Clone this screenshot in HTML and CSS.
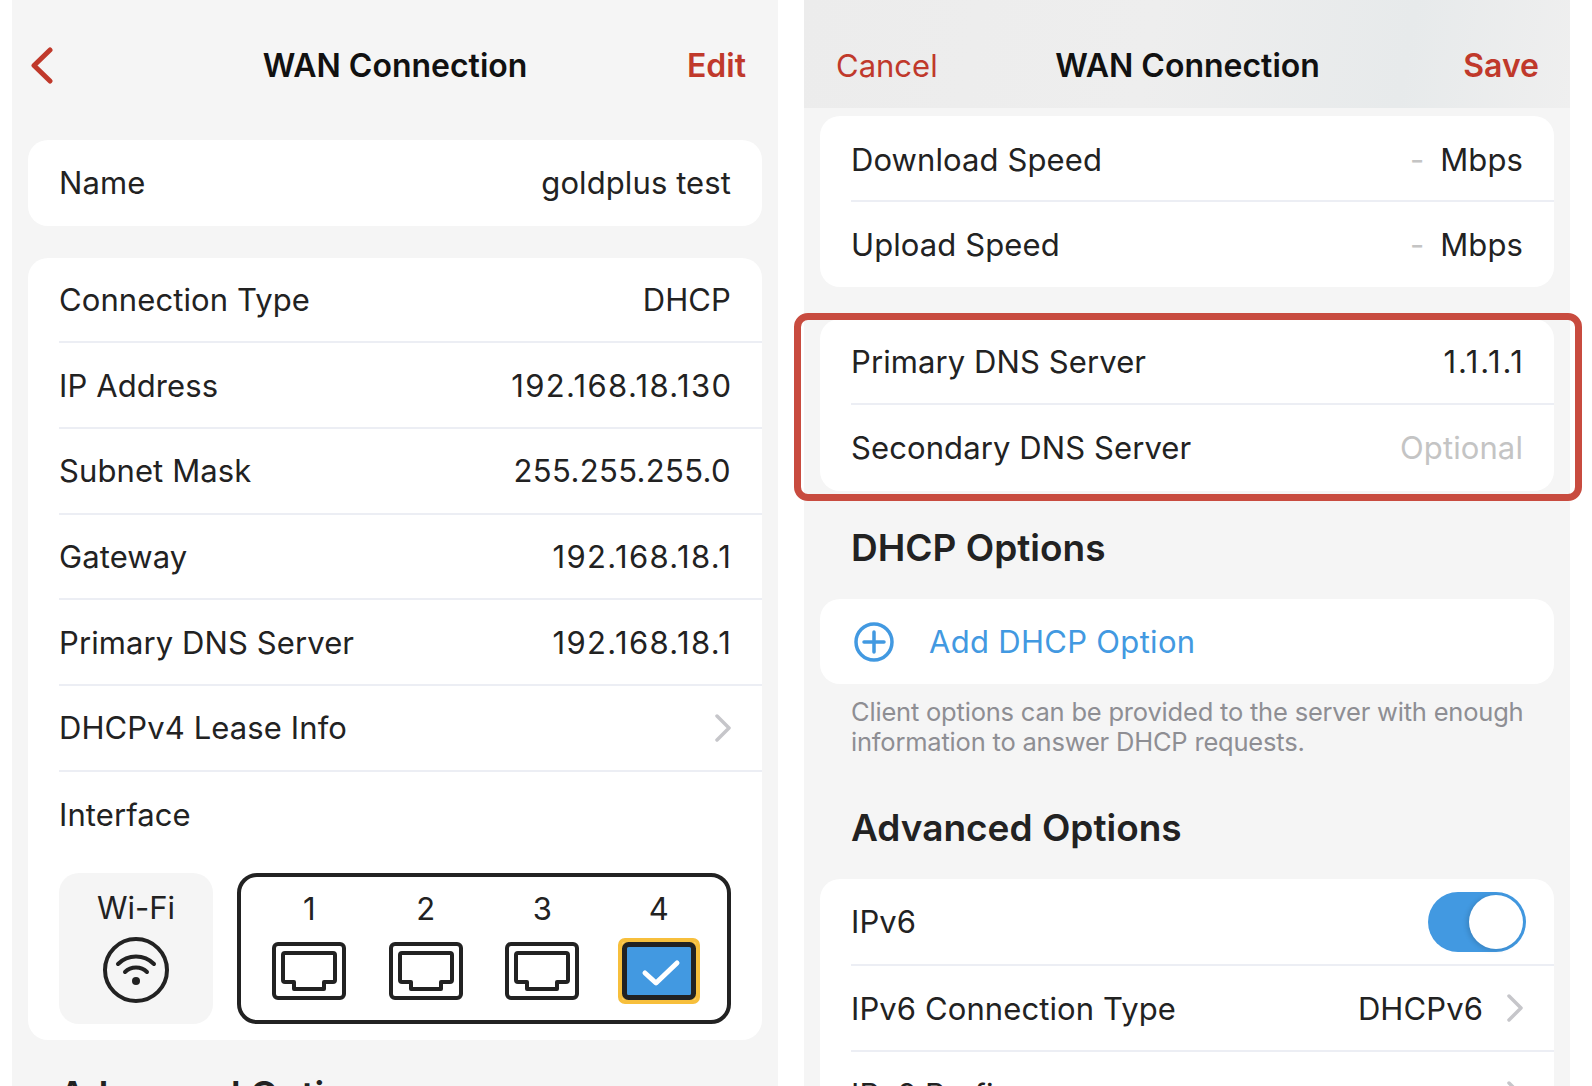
FILE: index.html
```html
<!DOCTYPE html>
<html lang="en">
<head>
<meta charset="utf-8">
<title>WAN Connection</title>
<link rel="stylesheet" href="styles.css">
</head>
<body>
<main class="screens">
  <section class="panel panel-view">
    <header class="nav nav-view">
      <span class="nav-left"><svg class="back" viewBox="0 0 24 37" width="24" height="37"><path d="M20 3 L4 18.5 L20 34" /></svg></span>
      <h1 class="nav-title">WAN Connection</h1>
      <span class="nav-right strong">Edit</span>
    </header>
    <div class="content content-view">
      <div class="card">
        <div class="row"><span>Name</span><span>goldplus test</span></div>
      </div>
      <div class="card">
        <div class="row"><span>Connection Type</span><span>DHCP</span></div>
        <div class="row"><span>IP Address</span><span class="ip-wide">192.168.18.130</span></div>
        <div class="row"><span>Subnet Mask</span><span class="ip-tight">255.255.255.0</span></div>
        <div class="row"><span>Gateway</span><span class="ip-wide">192.168.18.1</span></div>
        <div class="row"><span>Primary DNS Server</span><span class="ip-wide">192.168.18.1</span></div>
        <div class="row"><span>DHCPv4 Lease Info</span><svg class="chev" viewBox="0 0 16 28" width="16" height="28"><path d="M2 2 L14 14 L2 26" /></svg></div>
        <div class="row row-plain"><span>Interface</span></div>
        <div class="interface">
          <div class="wifi">
            <span>Wi-Fi</span>
            <svg viewBox="0 0 68 68" width="68" height="68"><circle class="ic" cx="34" cy="34" r="31"/><path class="ic" d="M16 28 C26 18 42 18 52 28"/><path class="ic" d="M23 36 C29 30 39 30 45 36"/><circle class="dot" cx="34" cy="45" r="4"/></svg>
          </div>
          <div class="ports">
            <div class="port"><span>1</span><svg viewBox="0 0 74 58" width="74" height="58"><rect class="ic" x="2" y="2" width="70" height="54" rx="4"/><path class="ic" d="M13 11 H61 Q63 11 63 13 V38 Q63 40 61 40 H52 V47 H22 V40 H13 Q11 40 11 38 V13 Q11 11 13 11 Z"/></svg></div>
            <div class="port"><span>2</span><svg viewBox="0 0 74 58" width="74" height="58"><rect class="ic" x="2" y="2" width="70" height="54" rx="4"/><path class="ic" d="M13 11 H61 Q63 11 63 13 V38 Q63 40 61 40 H52 V47 H22 V40 H13 Q11 40 11 38 V13 Q11 11 13 11 Z"/></svg></div>
            <div class="port"><span>3</span><svg viewBox="0 0 74 58" width="74" height="58"><rect class="ic" x="2" y="2" width="70" height="54" rx="4"/><path class="ic" d="M13 11 H61 Q63 11 63 13 V38 Q63 40 61 40 H52 V47 H22 V40 H13 Q11 40 11 38 V13 Q11 11 13 11 Z"/></svg></div>
            <div class="port port-on"><span>4</span><svg viewBox="0 0 74 58" width="74" height="58"><rect class="ic-on" x="2.5" y="2.5" width="69" height="53" rx="4"/><path class="tick" d="M23 31 L34 41 L55 21"/></svg></div>
          </div>
        </div>
      </div>
      <h2 class="section-title">Advanced Options</h2>
    </div>
  </section>

  <section class="panel panel-edit">
    <header class="nav nav-edit">
      <span class="nav-left">Cancel</span>
      <h1 class="nav-title">WAN Connection</h1>
      <span class="nav-right strong">Save</span>
    </header>
    <div class="content content-edit">
      <div class="card card-top">
        <div class="row"><span>Download Speed</span><span class="unit"><i class="dash">-</i>Mbps</span></div>
        <div class="row"><span>Upload Speed</span><span class="unit"><i class="dash">-</i>Mbps</span></div>
      </div>
      <div class="card card-marked">
        <div class="row"><span>Primary DNS Server</span><span class="ip-ones">1.1.1.1</span></div>
        <div class="row"><span>Secondary DNS Server</span><span class="muted">Optional</span></div>
      </div>
      <h2 class="section-title">DHCP Options</h2>
      <div class="card">
        <div class="row row-add">
          <svg class="add" viewBox="0 0 40 40" width="40" height="40"><circle cx="20" cy="20" r="18"/><path d="M20 10 V30 M10 20 H30"/></svg>
          <span>Add DHCP Option</span>
        </div>
      </div>
      <p class="note">Client options can be provided to the server with enough information to answer DHCP requests.</p>
      <h2 class="section-title section-advanced">Advanced Options</h2>
      <div class="card">
        <div class="row row-tall"><span>IPv6</span><span class="toggle"><span class="knob"></span></span></div>
        <div class="row"><span>IPv6 Connection Type</span><span class="with-chev">DHCPv6<svg class="chev" viewBox="0 0 16 28" width="16" height="28"><path d="M2 2 L14 14 L2 26" /></svg></span></div>
        <div class="row"><span>IPv6 Prefix</span><svg class="chev" viewBox="0 0 16 28" width="16" height="28"><path d="M2 2 L14 14 L2 26" /></svg></div>
      </div>
    </div>
  </section>
</main>
</body>
</html>
```

FILE: styles.css
```css
* { box-sizing: border-box; }
html, body { margin: 0; height: 1086px; overflow: hidden; background: #fff; }
body { font-family: Inter, "Noto Sans", sans-serif; color: #222; font-size: 31px; }
.screens { display: flex; gap: 26px; padding-left: 12px; height: 1086px; overflow: hidden; }
.panel { width: 766px; height: 1086px; background: #f5f5f5; flex: none; }
.nav { display: grid; grid-template-columns: 1fr auto 1fr; align-items: center; color: #c0392b; font-size: 32px; padding: 0 32px; }
.nav-view { height: 130px; }
.nav-edit { height: 108px; padding: 22px 31px 0 32px; background: linear-gradient(100deg, #ececec 0%, #eeeeee 45%, #e7eaeb 78%, #efefef 100%); }
.nav-edit .nav-left { font-size: 31px; }
.nav-title { margin: 0; font-size: 32px; font-weight: 600; color: #111; }
.nav-right { justify-self: end; }
.strong { font-weight: 600; }
.back { display: block; margin-left: -14px; fill: none; stroke: #c0392b; stroke-width: 5; stroke-linecap: round; stroke-linejoin: round; }
.content { padding: 8px 16px 0; display: flex; flex-direction: column; gap: 32px; }
.content-view { padding-top: 10px; }
.card { background: #fff; border-radius: 20px; flex: none; }
.card-top .row:first-child { padding-top: 3px; }
.card-marked { position: relative; }
.card-marked::after { content: ""; position: absolute; inset: -6px -28px -10px -26px; border: 7px solid #c84b3f; border-radius: 14px; }
.row { height: 85.7px; display: flex; align-items: center; justify-content: space-between; padding-right: 31px; margin-left: 31px; border-bottom: 2px solid #eceef4; letter-spacing: 0.1px; }
.row-tall { height: 87px; }
.card > .row:last-child { border-bottom: 0; }
.row-plain { border-bottom: 0; }
.muted { color: #c4c4c4; }
.ip-wide { letter-spacing: 1.35px; margin-right: -1.3px; }
.ip-tight { letter-spacing: 0.35px; }
.ip-ones { letter-spacing: 1.7px; margin-right: -1.7px; }
.chev { display: block; fill: none; stroke: #c6c6ca; stroke-width: 3.5; stroke-linecap: round; stroke-linejoin: round; }
.unit { display: flex; align-items: center; gap: 16px; }
.dash { font-style: normal; color: #c4c4c4; }
.with-chev { display: flex; align-items: center; gap: 24px; }
.interface { display: flex; gap: 24px; padding: 16px 31px 16px 31px; height: 183px; margin-top: -1px; }
.wifi { width: 154px; background: #f5f5f5; border-radius: 20px; display: flex; flex-direction: column; align-items: center; padding-top: 16px; gap: 10px; }
.ports { flex: 1; border: 4px solid #222; border-radius: 20px; display: grid; grid-template-columns: repeat(4, 1fr); padding: 0 10px; }
.port { display: flex; flex-direction: column; align-items: center; padding-top: 13px; gap: 15px; }
.port svg { display: block; }
.port-on svg { outline: 4px solid #f7bf3c; border-radius: 3px; background: #f7bf3c; }
.ic { fill: none; stroke: #222; stroke-width: 4; stroke-linejoin: round; stroke-linecap: round; }
.ic-on { fill: #4299e1; stroke: #222; stroke-width: 5; }
.dot { fill: #222; }
.tick { fill: none; stroke: #fff; stroke-width: 5; stroke-linecap: round; stroke-linejoin: round; }
.section-title { margin: 1px 0 0; padding-left: 31px; font-size: 37px; font-weight: 600; line-height: 44px; color: #222; flex: none; }
.content-edit .section-title { margin: 3px 0 -3px; }
.content-edit .section-advanced { margin-top: 18px; }
.row-add { justify-content: flex-start; gap: 35px; color: #4299e1; padding-left: 3px; letter-spacing: 0.3px; }
.add { flex: none; fill: none; stroke: #4299e1; stroke-width: 3.5; stroke-linecap: round; }
.note { margin: -19px 0 0; padding: 0 20px 0 31px; font-size: 25.5px; letter-spacing: -0.2px; line-height: 29.5px; color: #8e8e93; flex: none; }
.toggle { width: 98px; height: 60px; border-radius: 30px; background: #4299e1; display: flex; justify-content: flex-end; align-items: center; padding-right: 3px; margin-right: -3px; }
.knob { width: 54px; height: 54px; border-radius: 50%; background: #fff; box-shadow: -2px 1px 5px rgba(0, 0, 0, 0.15); }
```
